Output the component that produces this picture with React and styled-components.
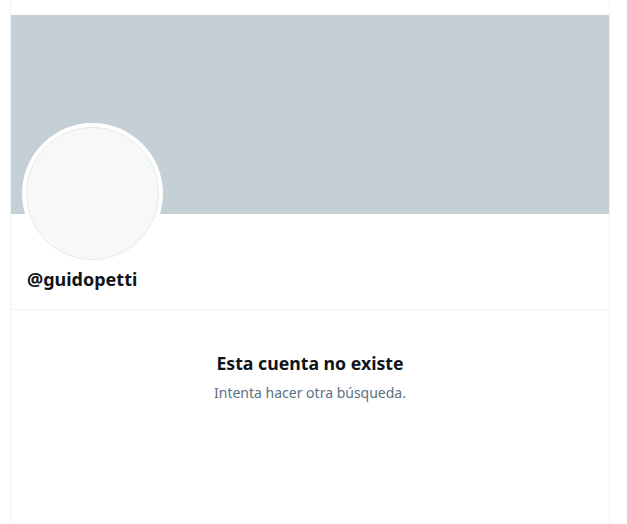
import styled, { createGlobalStyle } from "styled-components";

const GlobalStyle = createGlobalStyle`
  body {
    margin: 0;
    background: #ffffff;
    font-family: "Noto Sans", "Open Sans", sans-serif;
  }
`;

const Column = styled.main`
  box-sizing: border-box;
  width: 600px;
  min-height: 524px;
  margin-left: 10px;
  border-left: 1px solid #eff3f4;
  border-right: 1px solid #eff3f4;
  display: flex;
  flex-direction: column;
`;

const TopBar = styled.div`
  height: 15px;
`;

const Banner = styled.div`
  height: 199px;
  background: #c4cfd6;
`;

const ProfileHead = styled.div`
  display: flex;
  flex-direction: column;
  padding: 0 16px 0 11px;
  height: 95px;
  border-bottom: 1px solid #eff3f4;
`;

const Avatar = styled.div`
  box-sizing: border-box;
  width: 141px;
  height: 141px;
  margin-top: -91px;
  border-radius: 50%;
  background: #ffffff;
  padding: 4px;
`;

const AvatarInner = styled.div`
  box-sizing: border-box;
  width: 100%;
  height: 100%;
  border-radius: 50%;
  background: #f7f9f9;
  border: 1px solid #e6e9ea;
`;

const Handle = styled.div`
  margin: 3px 0 0 5px;
  font-size: 18px;
  font-weight: 700;
  line-height: 24px;
  color: #0f1419;
`;

const Empty = styled.section`
  display: flex;
  flex-direction: column;
  align-items: center;
  padding-top: 41px;
`;

const EmptyTitle = styled.h2`
  margin: 0;
  font-size: 17.7px;
  font-weight: 700;
  line-height: 24px;
  color: #0f1419;
`;

const EmptyText = styled.p`
  margin: 8px 0 0;
  font-size: 14px;
  line-height: 20px;
  color: #5b7083;
`;

export default function App() {
  return (
    <>
      <GlobalStyle />
      <Column>
        <TopBar />
        <Banner />
        <ProfileHead>
          <Avatar>
            <AvatarInner />
          </Avatar>
          <Handle>@guidopetti</Handle>
        </ProfileHead>
        <Empty>
          <EmptyTitle>Esta cuenta no existe</EmptyTitle>
          <EmptyText>Intenta hacer otra búsqueda.</EmptyText>
        </Empty>
      </Column>
    </>
  );
}
